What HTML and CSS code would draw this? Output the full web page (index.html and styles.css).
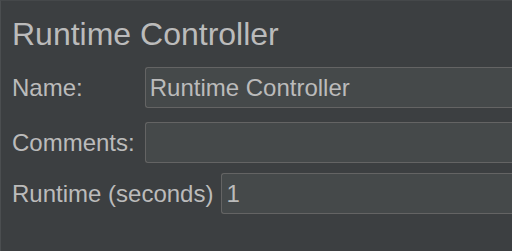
FILE: index.html
```html
<!DOCTYPE html>
<html lang="en">
<head>
<meta charset="UTF-8" />
<title>Runtime Controller</title>
<link rel="stylesheet" href="styles.css">
</head>
<body>

<div class="panel">
  <h1 class="title">Runtime Controller</h1>

  <div class="form-grid">
    <label for="name">Name:</label>
    <input type="text" id="name" class="field" value="Runtime Controller" />
    <label for="comments">Comments:</label>
    <input type="text" id="comments" class="field" value="" />
  </div>

  <div class="runtime-row">
    <label for="runtime">Runtime (seconds)</label>
    <input type="text" id="runtime" class="field" value="1" />
  </div>
</div>

</body>
</html>
```

FILE: styles.css
```css
html, body { margin: 0; height: 100%; overflow: hidden; }
body {
  background: #3c3f41; color: #bbbbbb;
  font-family: "Liberation Sans", Arial, sans-serif;
}
.panel {
  width: 100%; height: 100%; box-sizing: border-box;
  border-left: 1px solid #4b4e50; border-top: 1px solid #45484a;
  padding: 13px 0 0 11px;
}
.title { font-size: 32px; font-weight: normal; line-height: 40px; margin: 0; }
.form-grid {
  display: grid; grid-template-columns: auto 1fr;
  column-gap: 10px; row-gap: 14px; align-items: center;
  margin-top: 13px;
}
label { font-size: 24px; white-space: nowrap; }
/* fields run on past the right edge, so no right border */
.field {
  height: 41px; box-sizing: border-box; margin: 0; min-width: 0; width: 100%;
  background: #45494a; color: #bbbbbb;
  border: 1px solid #646464; border-right: none; border-radius: 3px 0 0 3px;
  padding: 0 4px; outline: none;
  font-family: "Liberation Sans", Arial, sans-serif; font-size: 24px;
}
.runtime-row { display: flex; align-items: center; gap: 8px; margin-top: 10px; }
.runtime-row .field { flex: 1; }
```
